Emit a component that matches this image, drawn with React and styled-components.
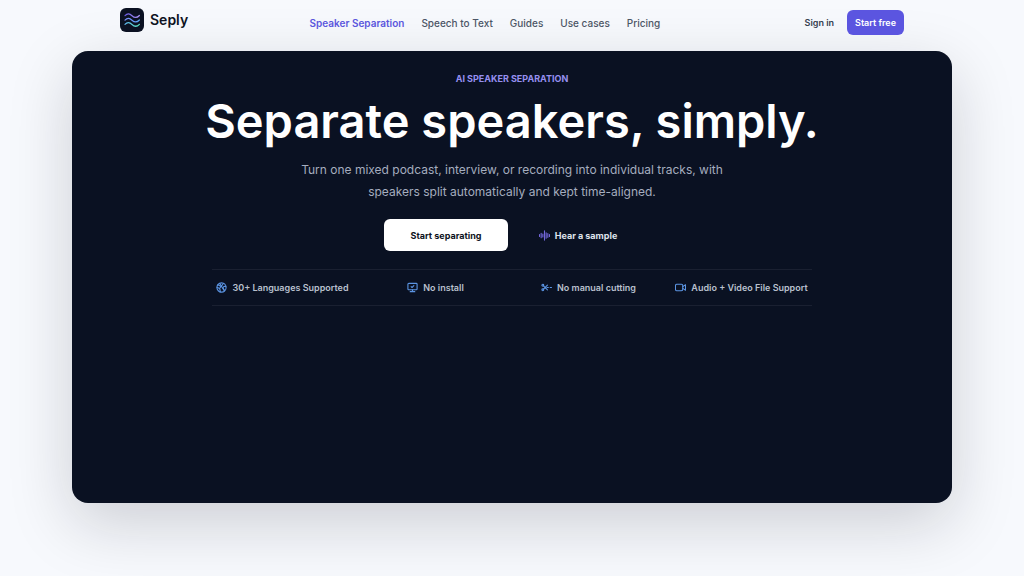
import React from "react";
import styled, { createGlobalStyle } from "styled-components";

const NAV_LINKS = [
  { label: "Speaker Separation", active: true },
  { label: "Speech to Text" },
  { label: "Guides" },
  { label: "Use cases" },
  { label: "Pricing" },
];

const LogoMark = () => (
  <svg viewBox="0 0 24 24" width="24" height="24" fill="none" aria-hidden="true">
    <defs>
      <linearGradient id="wave-top" x1="5" y1="0" x2="19" y2="0" gradientUnits="userSpaceOnUse">
        <stop stopColor="#6d5ce8" />
        <stop offset="1" stopColor="#a894f8" />
      </linearGradient>
      <linearGradient id="wave-mid" x1="5" y1="0" x2="19" y2="0" gradientUnits="userSpaceOnUse">
        <stop stopColor="#7c8cf8" />
        <stop offset="1" stopColor="#5aa2f5" />
      </linearGradient>
      <linearGradient id="wave-low" x1="5" y1="0" x2="19" y2="0" gradientUnits="userSpaceOnUse">
        <stop stopColor="#5fb8ee" />
        <stop offset="1" stopColor="#5be0c0" />
      </linearGradient>
    </defs>
    <rect width="24" height="24" rx="6" fill="#0b1122" />
    <g strokeWidth="1.2" strokeLinecap="round">
      <path d="M5 7.6C7.4 5 9.6 5.4 12 7.7S17 10 19.4 7.5" stroke="url(#wave-top)" />
      <path d="M5 12.1C7.4 9.5 9.6 9.9 12 12.2S17 14.5 19.4 12" stroke="url(#wave-mid)" />
      <path d="M5 16.4C7.4 13.8 9.6 14.2 12 16.5S17 18.8 19.4 16.3" stroke="url(#wave-low)" />
    </g>
  </svg>
);

const GlobeIcon = () => (
  <Icon viewBox="0 0 24 24" aria-hidden="true">
    <circle cx="12" cy="12" r="10" />
    <path d="M4 6c3 1 4 3 7 3s2-4 6-6" />
    <path d="M2.5 12c4 0 5 2 6 4s0 4 1 5.5" />
    <path d="M21.5 10c-3-1-6 0-6 3s3 2 3 6" />
    <path d="M8 3l10 16M11 9l-3 5" />
  </Icon>
);

const MonitorIcon = () => (
  <Icon viewBox="0 0 24 24" aria-hidden="true">
    <rect x="2" y="3" width="20" height="14" rx="2" />
    <path d="m9 10 2 2 4-4M12 17v4M7 21h10" />
  </Icon>
);

const CutIcon = () => (
  <Icon viewBox="0 0 24 24" aria-hidden="true">
    <circle cx="4" cy="7" r="2" />
    <circle cx="4" cy="17" r="2" />
    <path d="M5.5 8.4 14 17M5.5 15.6 14 7M13 12h3M20 12h3" />
  </Icon>
);

const VideoIcon = () => (
  <Icon viewBox="0 0 24 24" aria-hidden="true">
    <rect x="1" y="5" width="16" height="14" rx="3" />
    <path d="m17 10 6-4v12l-6-4" />
  </Icon>
);

const WaveIcon = () => (
  <Icon viewBox="0 0 24 24" $color="#7468dc" aria-hidden="true">
    <path d="M1 10v4M4.7 7v10M8.4 9v6M12 2v20M15.6 6v12M19.3 8v8M23 10v4" />
  </Icon>
);

const FEATURES = [
  { label: "30+ Languages Supported", icon: <GlobeIcon /> },
  { label: "No install", icon: <MonitorIcon /> },
  { label: "No manual cutting", icon: <CutIcon /> },
  { label: "Audio + Video File Support", icon: <VideoIcon /> },
];

const App = () => (
  <Page>
    <GlobalStyle />
    <Header>
      <Brand href="#">
        <LogoMark />
        Seply
      </Brand>
      <Nav aria-label="Main">
        {NAV_LINKS.map(({ label, active }) => (
          <NavLink key={label} href="#" $active={active}>
            {label}
          </NavLink>
        ))}
      </Nav>
      <Account>
        <SignIn href="#">Sign in</SignIn>
        <StartFree type="button">Start free</StartFree>
      </Account>
    </Header>

    <Hero>
      <Eyebrow>AI SPEAKER SEPARATION</Eyebrow>
      <Title>Separate speakers, simply.</Title>
      <Lead>
        Turn one mixed podcast, interview, or recording into individual tracks,
        with speakers split automatically and kept time-aligned.
      </Lead>
      <Actions>
        <ActionButton type="button" $primary>
          Start separating
        </ActionButton>
        <ActionButton type="button">
          <WaveIcon />
          Hear a sample
        </ActionButton>
      </Actions>
      <Features>
        {FEATURES.map(({ label, icon }) => (
          <Feature key={label}>
            {icon}
            {label}
          </Feature>
        ))}
      </Features>
    </Hero>
  </Page>
);

export default App;

const GlobalStyle = createGlobalStyle`
  *,
  *::before,
  *::after {
    box-sizing: border-box;
  }

  body {
    margin: 0;
    background: #f7f9fd;
    font-family: Inter, "Liberation Sans", sans-serif;
  }

  button {
    font-family: inherit;
  }
`;

const Page = styled.div`
  max-width: 928px;
  min-height: 100vh;
  margin: 0 auto;
  padding: 0 24px;
`;

const Header = styled.header`
  position: relative;
  z-index: 1;
  display: grid;
  grid-template-columns: 7fr auto 9fr;
  align-items: center;
  padding: 8px 48px 16px;
`;

const Brand = styled.a`
  display: flex;
  align-items: center;
  align-self: start;
  gap: 6px;
  color: #0d1221;
  font-size: 14px;
  font-weight: 600;
  line-height: 24px;
  text-decoration: none;
`;

const Nav = styled.nav`
  display: flex;
  gap: 17px;
  padding-top: 2px;
`;

const NavLink = styled.a`
  color: ${({ $active }) => ($active ? "#5b56dd" : "#4c5565")};
  font-size: 10px;
  font-weight: ${({ $active }) => ($active ? 600 : 500)};
  line-height: 16px;
  text-decoration: none;
  white-space: nowrap;
`;

const Account = styled.div`
  display: flex;
  align-items: center;
  justify-content: flex-end;
  gap: 13px;
  padding-top: 2px;
`;

const SignIn = styled.a`
  color: #384150;
  font-size: 9px;
  font-weight: 600;
  line-height: 16px;
  text-decoration: none;
`;

const StartFree = styled.button`
  height: 25px;
  padding: 0 8px;
  border: 0;
  border-radius: 6px;
  background: #5b55e0;
  color: #fff;
  font-size: 9px;
  font-weight: 600;
  white-space: nowrap;
`;

const Hero = styled.main`
  display: flex;
  flex-direction: column;
  align-items: center;
  min-height: calc(100vh - 124px);
  padding: 20px 24px;
  border-radius: 16px;
  background: #0a1122;
  box-shadow: 0 20px 64px rgba(15, 18, 30, 0.18);
  text-align: center;
`;

const Eyebrow = styled.p`
  margin: 0;
  color: #968ff0;
  font-size: 9px;
  font-weight: 700;
  line-height: 16px;
`;

const Title = styled.h1`
  margin: 8px 0 0;
  color: #fff;
  font-size: 47px;
  font-weight: 600;
  line-height: 52px;
`;

const Lead = styled.p`
  max-width: 432px;
  margin: 12px 0 0;
  color: #a5adbf;
  font-size: 12px;
  line-height: 22px;
`;

const Actions = styled.div`
  display: grid;
  grid-template-columns: 1fr 1fr;
  gap: 8px;
  width: 256px;
  margin-top: 16px;
`;

const ActionButton = styled.button`
  display: flex;
  align-items: center;
  justify-content: center;
  gap: 5px;
  height: 32px;
  padding: 0;
  border: 0;
  border-radius: 6px;
  background: ${({ $primary }) => ($primary ? "#fff" : "transparent")};
  color: ${({ $primary }) => ($primary ? "#0d1221" : "#dfe3ec")};
  font-size: 9px;
  font-weight: 700;
  white-space: nowrap;
`;

const Features = styled.ul`
  display: grid;
  grid-template-columns: repeat(4, 1fr);
  gap: 12px;
  width: 100%;
  max-width: 600px;
  margin: 18px 0 0;
  padding: 9px 0;
  border-top: 1px solid #1a2031;
  border-bottom: 1px solid #1a2031;
  list-style: none;
`;

const Feature = styled.li`
  display: flex;
  align-items: center;
  justify-content: center;
  gap: 5px;
  color: #b9c0ce;
  font-size: 9px;
  font-weight: 600;
  line-height: 17px;
  white-space: nowrap;
`;

const Icon = styled.svg`
  flex: none;
  width: 11px;
  height: 11px;
  fill: none;
  stroke: ${({ $color }) => $color || "#5b94e2"};
  stroke-width: 2.4;
  stroke-linecap: round;
  stroke-linejoin: round;
`;
